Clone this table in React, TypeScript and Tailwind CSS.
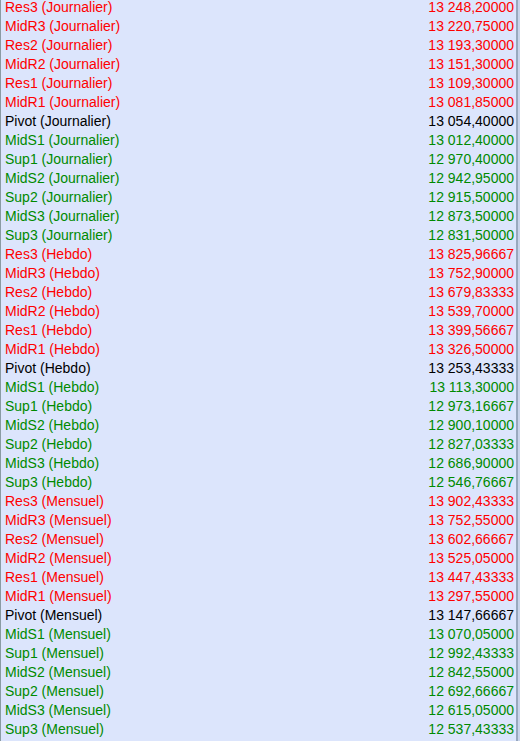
type Level = { name: string; value: string; kind: "res" | "pivot" | "sup" };

const periods: { label: string; rows: [string, string][] }[] = [
  {
    label: "Journalier",
    rows: [
      ["Res3", "13 248,20000"],
      ["MidR3", "13 220,75000"],
      ["Res2", "13 193,30000"],
      ["MidR2", "13 151,30000"],
      ["Res1", "13 109,30000"],
      ["MidR1", "13 081,85000"],
      ["Pivot", "13 054,40000"],
      ["MidS1", "13 012,40000"],
      ["Sup1", "12 970,40000"],
      ["MidS2", "12 942,95000"],
      ["Sup2", "12 915,50000"],
      ["MidS3", "12 873,50000"],
      ["Sup3", "12 831,50000"],
    ],
  },
  {
    label: "Hebdo",
    rows: [
      ["Res3", "13 825,96667"],
      ["MidR3", "13 752,90000"],
      ["Res2", "13 679,83333"],
      ["MidR2", "13 539,70000"],
      ["Res1", "13 399,56667"],
      ["MidR1", "13 326,50000"],
      ["Pivot", "13 253,43333"],
      ["MidS1", "13 113,30000"],
      ["Sup1", "12 973,16667"],
      ["MidS2", "12 900,10000"],
      ["Sup2", "12 827,03333"],
      ["MidS3", "12 686,90000"],
      ["Sup3", "12 546,76667"],
    ],
  },
  {
    label: "Mensuel",
    rows: [
      ["Res3", "13 902,43333"],
      ["MidR3", "13 752,55000"],
      ["Res2", "13 602,66667"],
      ["MidR2", "13 525,05000"],
      ["Res1", "13 447,43333"],
      ["MidR1", "13 297,55000"],
      ["Pivot", "13 147,66667"],
      ["MidS1", "13 070,05000"],
      ["Sup1", "12 992,43333"],
      ["MidS2", "12 842,55000"],
      ["Sup2", "12 692,66667"],
      ["MidS3", "12 615,05000"],
      ["Sup3", "12 537,43333"],
    ],
  },
];

const levels: Level[] = periods.flatMap((p) =>
  p.rows.map(([n, v]) => ({
    name: `${n} (${p.label})`,
    value: v,
    kind: n.startsWith("Pivot") ? "pivot" : n.includes("R") ? "res" : "sup",
  }))
);

function colorFor(kind: Level["kind"]) {
  if (kind === "res") return "text-[#ff0000]";
  if (kind === "sup") return "text-[#008a00]";
  return "text-black";
}

export default function App() {
  return (
    <div className="h-[741px] w-[520px] overflow-hidden bg-[#dce5fc] font-['Liberation_Sans',Arial,sans-serif] text-[14px]">
      <div className="flex h-full border-l border-[#8a9ba3]">
        <div className="-mt-[2px] flex-1 pl-[4px] pr-[2px]">
          {levels.map((l, i) => (
            <div key={i} className={`flex h-[19px] items-center justify-between ${colorFor(l.kind)}`}>
              <span>{l.name}</span>
              <span>{l.value}</span>
            </div>
          ))}
        </div>
        <div className="w-[2px] bg-[#98a8be]" />
        <div className="w-[2px] bg-[#c8d3ea]" />
      </div>
    </div>
  );
}
